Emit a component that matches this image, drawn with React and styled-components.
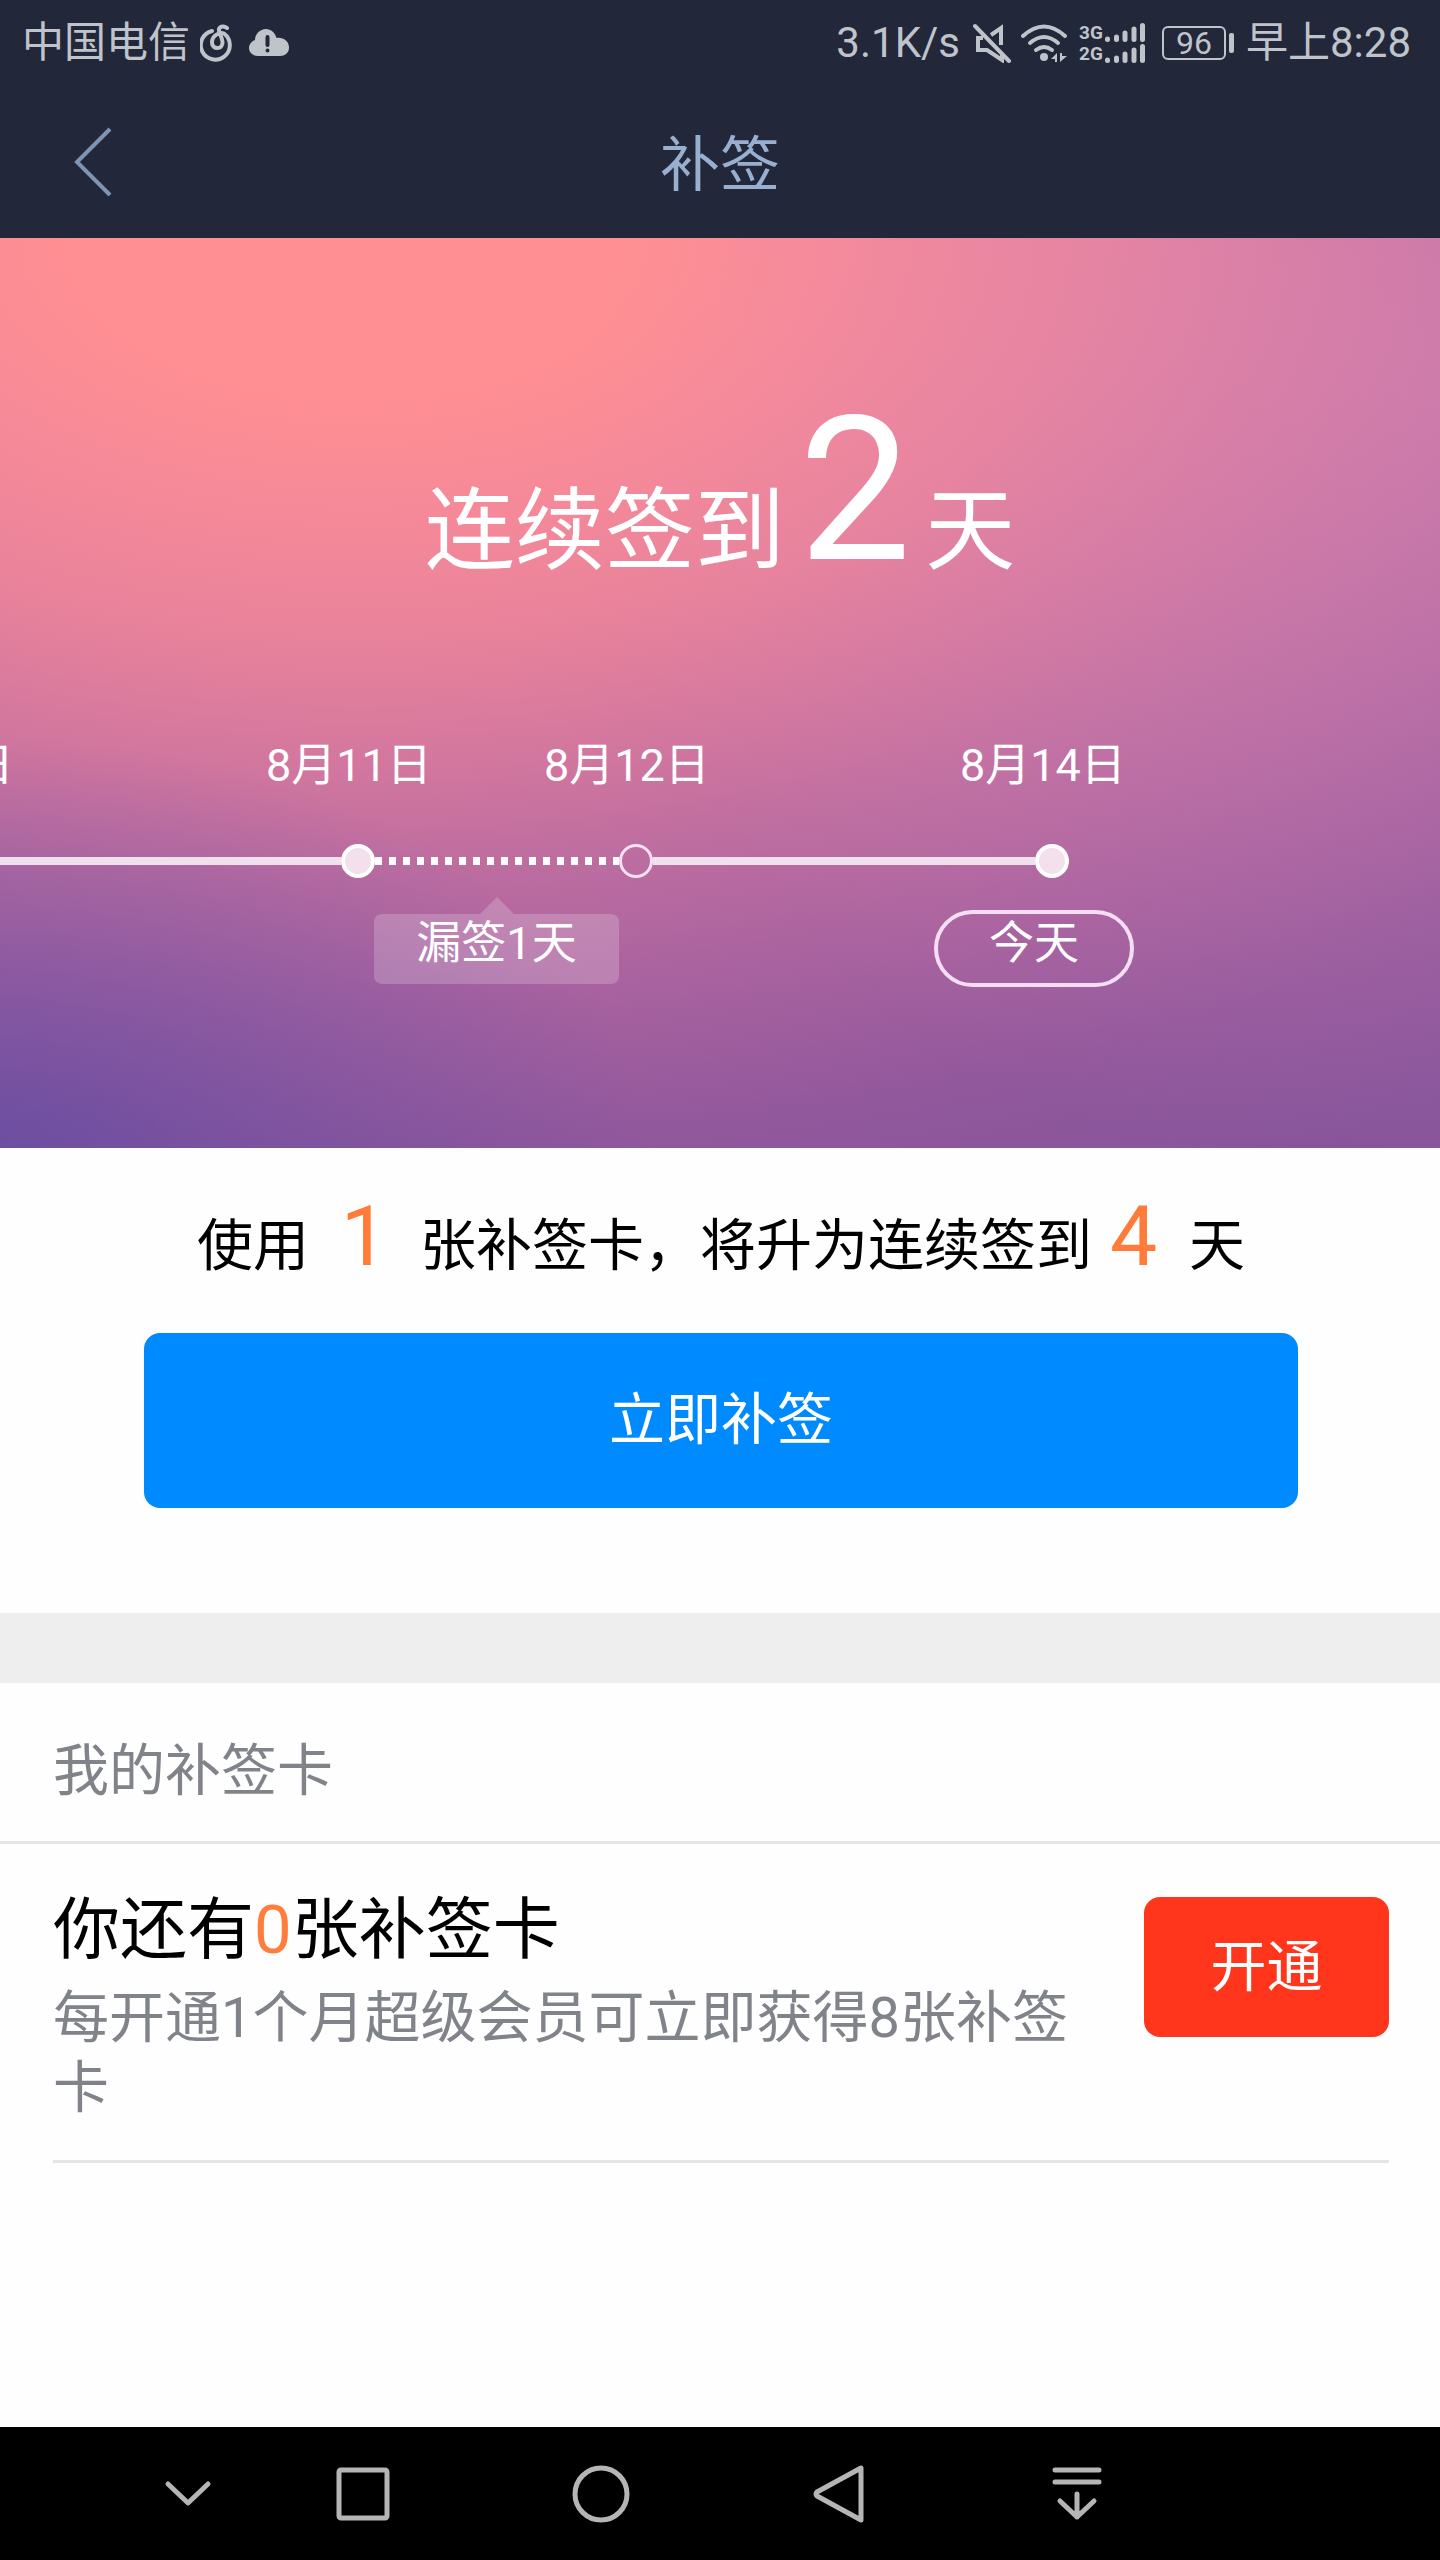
import React from "react";
import styled, { createGlobalStyle } from "styled-components";

const steps = [
  { date: "8月10日", size: 418, line: "solid" },
  { date: "8月11日", size: 278, line: "dotted", missed: "漏签1天" },
  { date: "8月12日", size: 416, line: "solid", empty: true },
  { date: "8月14日", size: 480, line: "none", today: "今天" },
];

function MusicIcon() {
  return (
    <svg width="34" height="38" viewBox="0 0 34 38" fill="none">
      <path
        d="M12 7A14.500 14.500 0 1 0 24 9.500C20 8 12 11 12 18.500C12 26 23 26 22.500 18C22 12 18 8 19 5C20 2 24 1.500 27 4"
        stroke="currentColor"
        strokeWidth="4"
        strokeLinecap="round"
      />
    </svg>
  );
}

function CloudIcon() {
  return (
    <svg width="40" height="28" viewBox="0 0 40 28">
      <path
        d="M9 27C4 27 0 23.500 0 19C0 15 3 12 6 11C6 5 11 0 17 0C22 0 26 3.500 27.500 9C34 8 40 12 40 18.500C40 24 36 27 31 27Z"
        fill="currentColor"
      />
      <path d="M18.500 8V16M18.500 21.500V21.600" stroke="#222739" strokeWidth="4" strokeLinecap="round" />
    </svg>
  );
}

function MuteIcon() {
  return (
    <svg width="40" height="40" viewBox="0 0 40 40" fill="none" stroke="currentColor">
      <path d="M19 12L29 5V22M30 32V37L15 27H6V15H11" strokeWidth="4" />
      <path d="M3 3L37 38" strokeWidth="4" strokeLinecap="round" />
    </svg>
  );
}

function WifiIcon() {
  return (
    <svg width="46" height="40" viewBox="0 0 46 40" fill="none">
      <g stroke="currentColor" strokeWidth="4" strokeLinecap="round">
        <path d="M2 13Q23 -6 44 13" />
        <path d="M9 20Q23 8 37 20" />
        <path d="M15 27Q23 21 31 27" />
      </g>
      <circle cx="23" cy="34" r="4" fill="currentColor" />
      <path d="M36 30V39H34V36H30ZM39 30V39L46 33H41V30Z" fill="currentColor" />
    </svg>
  );
}

function BarsIcon() {
  return (
    <svg width="40" height="19" viewBox="0 0 40 19" stroke="currentColor" strokeWidth="5" strokeLinecap="round">
      <path d="M2.500 16.500V16M11.500 16.500V14M20 16.500V10M29 16.500V6M37.500 16.500V2.500" />
    </svg>
  );
}

function App() {
  return (
    <Page>
      <GlobalStyle />
      <Header>
        <StatusBar>
          <StatusGroup>
            <span>中国电信</span>
            <StatusIcon $left={10}>
              <MusicIcon />
            </StatusIcon>
            <StatusIcon $left={15}>
              <CloudIcon />
            </StatusIcon>
          </StatusGroup>
          <StatusGroup>
            <span>3.1K/s</span>
            <StatusIcon $left={12}>
              <MuteIcon />
            </StatusIcon>
            <StatusIcon $left={9}>
              <WifiIcon />
            </StatusIcon>
            <Signals>
              <Signal>
                3G
                <BarsIcon />
              </Signal>
              <Signal>
                2G
                <BarsIcon />
              </Signal>
            </Signals>
            <Battery>96</Battery>
            <span>早上8:28</span>
          </StatusGroup>
        </StatusBar>
        <TitleBar>
          <BackButton aria-label="返回">
            <svg width="40" height="70" viewBox="0 0 40 70" fill="none">
              <path d="M38 2L5 35L38 68" stroke="currentColor" strokeWidth="4" />
            </svg>
          </BackButton>
          <Title>补签</Title>
        </TitleBar>
      </Header>

      <Hero>
        <Streak>
          <span>连续签到</span>
          <StreakCount>2</StreakCount>
          <span>天</span>
        </Streak>
        <Timeline>
          {steps.map((step) => (
            <Step key={step.date} $size={step.size}>
              <StepDate>{step.date}</StepDate>
              <Track>
                <Dot $empty={step.empty} />
                <Line $kind={step.line} />
              </Track>
              {step.missed && <Missed>{step.missed}</Missed>}
              {step.today && <Today>{step.today}</Today>}
            </Step>
          ))}
        </Timeline>
      </Hero>

      <Promo>
        <PromoText>
          使用 <Count>1</Count> 张补签卡，将升为连续签到<Count>4</Count> 天
        </PromoText>
        <SignButton>立即补签</SignButton>
      </Promo>

      <Cards>
        <CardsTitle>我的补签卡</CardsTitle>
        <CardRow>
          <CardInfo>
            <CardName>
              你还有<em>0</em>张补签卡
            </CardName>
            <CardNote>每开通1个月超级会员可立即获得8张补签卡</CardNote>
          </CardInfo>
          <OpenButton>开通</OpenButton>
        </CardRow>
      </Cards>

      <NavBar>
        <NavButton aria-label="收起">
          <svg width="60" height="60" viewBox="0 0 60 60">
            <path d="M10 20L30 39L50 20" />
          </svg>
        </NavButton>
        <NavButton aria-label="最近任务">
          <svg width="60" height="60" viewBox="0 0 60 60">
            <rect x="7" y="6" width="48" height="48" rx="2" />
          </svg>
        </NavButton>
        <NavButton aria-label="主屏幕">
          <svg width="60" height="60" viewBox="0 0 60 60">
            <circle cx="31" cy="30" r="26" />
          </svg>
        </NavButton>
        <NavButton aria-label="返回上一页">
          <svg width="60" height="60" viewBox="0 0 60 60">
            <path d="M52 4V56L8 32Q6 30 8 28Z" />
          </svg>
        </NavButton>
        <NavButton aria-label="下拉通知栏">
          <svg width="60" height="60" viewBox="0 0 60 60">
            <path d="M8 6H52M8 18H52M30 30V53M13 37L30 53L47 37" />
          </svg>
        </NavButton>
      </NavBar>
    </Page>
  );
}

export default App;

const GlobalStyle = createGlobalStyle`
  * {
    box-sizing: border-box;
  }
  body {
    margin: 0;
    background: #fefefe;
    font-family: Roboto, "Noto Sans CJK SC", sans-serif;
  }
  button {
    border: none;
    padding: 0;
    font-family: inherit;
    cursor: pointer;
  }
`;

const Page = styled.div`
  display: flex;
  flex-direction: column;
  min-height: 100vh;
  overflow: hidden;
`;
const Header = styled.header`
  background: #222739;
`;
const StatusBar = styled.div`
  display: flex;
  justify-content: space-between;
  height: 86px;
  padding: 0 29px 0 22px;
  color: #bfc4cb;
  font-size: 42px;
  line-height: 86px;
`;
const StatusGroup = styled.div`
  display: flex;
  align-items: center;
`;
const StatusIcon = styled.span`
  display: flex;
  margin-left: ${(props) => props.$left}px;
`;
const Signals = styled.div`
  display: flex;
  flex-direction: column;
  gap: 2px;
  margin-left: 12px;
`;
const Signal = styled.div`
  display: flex;
  align-items: center;
  justify-content: space-between;
  width: 66px;
  font-family: "Liberation Sans Narrow", Roboto, sans-serif;
  font-size: 19px;
  font-weight: 700;
  line-height: 19px;
`;
const Battery = styled.div`
  position: relative;
  width: 64px;
  height: 34px;
  margin: 0 20px 0 17px;
  border: 2px solid currentColor;
  border-radius: 6px;
  font-size: 32px;
  line-height: 30px;
  text-align: center;
  &::after {
    content: "";
    position: absolute;
    top: 5px;
    right: -10px;
    width: 5px;
    height: 20px;
    border-radius: 2px;
    background: currentColor;
  }
`;
const TitleBar = styled.div`
  display: grid;
  grid-template-columns: 1fr auto 1fr;
  align-items: center;
  height: 152px;
  padding: 0 72px;
  color: #98afd0;
`;
const BackButton = styled.button`
  justify-self: start;
  display: flex;
  background: none;
  color: #7d94b5;
`;
const Title = styled.h1`
  margin: 0;
  padding-top: 8px;
  font-size: 60px;
  font-weight: 400;
  line-height: 144px;
`;

const Hero = styled.section`
  height: 910px;
  overflow: hidden;
  color: #fff;
  background:
    radial-gradient(45% 45% at 0% 100%, rgba(85, 72, 165, 0.6), rgba(95, 80, 165, 0)),
    radial-gradient(60% 90% at 100% 15%, rgba(222, 140, 185, 0.45), rgba(222, 120, 185, 0)),
    radial-gradient(
      138% 120% at 25% 0%,
      #ff8f92 0%,
      #ff8f92 14%,
      #f78a98 24%,
      #e8829b 37%,
      #d5789e 47%,
      #bd6da0 58%,
      #a8629f 70%,
      #92589c 83%,
      #86549b 96%
    );
`;
const Streak = styled.div`
  display: flex;
  justify-content: center;
  align-items: flex-end;
  height: 350px;
  font-size: 90px;
  line-height: 112px;
`;
const StreakCount = styled.strong`
  margin: 0 14px;
  font-size: 200px;
  font-weight: 400;
  line-height: 194px;
`;
/* the strip is scrolled to today, so the first day runs off the left side */
const Timeline = styled.ol`
  display: flex;
  margin: 144px 0 0 -152px;
  padding: 0;
  list-style: none;
  font-size: 45px;
`;
const Step = styled.li`
  flex: none;
  width: ${(props) => props.$size}px;
`;
const StepDate = styled.div`
  line-height: 68px;
`;
const Track = styled.div`
  display: flex;
  align-items: center;
  height: 34px;
  margin: 44px -75px 0 75px;
`;
const Dot = styled.i`
  flex: none;
  width: 34px;
  height: 34px;
  border: ${(props) => (props.$empty ? "3px solid #fbe0f3" : "4px solid #fff")};
  border-radius: 50%;
  background: ${(props) => (props.$empty ? "none" : "#f4e0ec")};
`;
const Line = styled.i`
  flex: 1;
  height: 8px;
  background: ${(props) =>
    ({
      solid: "rgba(255, 255, 255, 0.8)",
      dotted: "repeating-linear-gradient(90deg, #fff 0 7px, transparent 7px 14px)",
      none: "none",
    })[props.$kind]};
`;
const Missed = styled.div`
  position: relative;
  width: 245px;
  height: 70px;
  margin: 36px 0 0 108px;
  border-radius: 8px;
  background: rgba(255, 255, 255, 0.2);
  line-height: 60px;
  text-align: center;
  &::before {
    content: "";
    position: absolute;
    bottom: 100%;
    left: 50%;
    margin-left: -17px;
    border: 17px solid transparent;
    border-top-width: 0;
    border-bottom-color: rgba(255, 255, 255, 0.2);
  }
`;
const Today = styled.div`
  width: 200px;
  height: 77px;
  margin: 32px 0 0 -26px;
  border: 4px solid #f5def3;
  border-radius: 40px;
  line-height: 60px;
  text-align: center;
`;

const Promo = styled.section`
  display: flex;
  flex-direction: column;
  padding: 40px 142px 105px 144px;
`;
const PromoText = styled.p`
  margin: 0;
  color: #000;
  font-size: 56px;
  line-height: 116px;
  text-align: center;
  white-space: nowrap;
`;
const Count = styled.strong`
  margin: 0 18px;
  color: #ff7b3a;
  font-size: 84px;
  font-weight: 400;
  line-height: 84px;
`;
const SignButton = styled.button`
  height: 175px;
  margin-top: 29px;
  padding-bottom: 12px;
  border-radius: 16px;
  background: #008aff;
  color: #fff;
  font-size: 56px;
`;

const Cards = styled.section`
  flex: 1;
  border-top: 70px solid #eee;
`;
const CardsTitle = styled.h2`
  margin: 0;
  padding: 18px 0 0 53px;
  border-bottom: 3px solid #e5e5e5;
  color: #808389;
  font-size: 56px;
  font-weight: 400;
  line-height: 140px;
`;
const CardRow = styled.div`
  display: flex;
  justify-content: space-between;
  align-items: flex-start;
  gap: 60px;
  margin: 0 51px 0 53px;
  padding: 53px 0 37px;
  border-bottom: 3px solid #e5e5e5;
`;
const CardInfo = styled.div`
  flex: 1;
`;
const CardName = styled.h3`
  margin: 0 0 20px;
  color: #000;
  font-size: 67px;
  font-weight: 400;
  line-height: 66px;
  & em {
    color: #ff7e3e;
    font-style: normal;
  }
`;
const CardNote = styled.p`
  margin: 0;
  color: #808389;
  font-size: 56px;
  line-height: 70px;
`;
const OpenButton = styled.button`
  width: 245px;
  height: 140px;
  padding-bottom: 12px;
  border-radius: 16px;
  background: #ff361b;
  color: #fff;
  font-size: 56px;
`;

const NavBar = styled.nav`
  display: grid;
  grid-template-columns: 110fr repeat(4, 238fr);
  height: 133px;
  padding: 0 244px 0 133px;
  background: #000;
`;
const NavButton = styled.button`
  display: flex;
  align-items: center;
  justify-content: center;
  background: none;
  & svg {
    fill: none;
    stroke: #b5b5b5;
    stroke-width: 5;
    stroke-linecap: round;
    stroke-linejoin: round;
  }
`;
